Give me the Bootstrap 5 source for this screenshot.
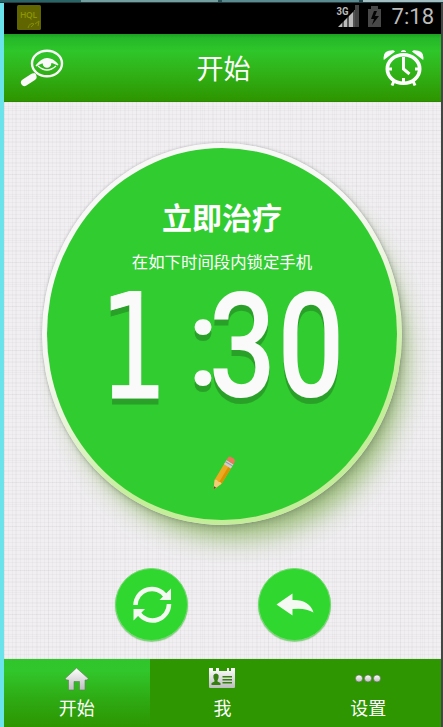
<!DOCTYPE html>
<html lang="zh-CN">
<head>
<meta charset="utf-8">
<meta name="viewport" content="width=device-width, initial-scale=1">
<title>开始</title>
<link href="https://cdn.jsdelivr.net/npm/bootstrap@5.3.0/dist/css/bootstrap.min.css" rel="stylesheet">
<style>
body{background:#eeecef;font-family:Roboto,"Noto Sans CJK SC",sans-serif;width:443px;height:727px}
svg{display:block;flex:none}
.desktop-strip{height:3px;background:linear-gradient(90deg,#2a6467 0 81px,#739fa1 81px 218px,#2a5558 218px 222px,#5a8b91 222px 359px,#20474c 359px 363px,#a4bfc4 363px);border-bottom:1px solid #213f42}
.device{border-left:4px solid #6be3eb;border-right:2px solid #454545;height:724px}
.status{height:31px;background:#000;padding:0 7px 3px 13px;color:#bcbcbc}
.clock{font-size:22px;line-height:28px}
.app-head{height:68px;background:linear-gradient(#1d9f20 0,#25b829 6%,#2ec62a 25%,#30b015 60%,#2d9500 98%,#268100);padding:0 17px 0 16px}
.app-head h1{font-size:27px;line-height:40px;padding-top:4px}
.woven{background-color:#f1eff2;background-image:repeating-linear-gradient(0deg,rgba(80,70,80,.035) 0 1px,transparent 1px 4px),repeating-linear-gradient(90deg,rgba(80,70,80,.035) 0 1px,transparent 1px 4px),repeating-linear-gradient(0deg,rgba(80,70,80,.03) 0 1px,transparent 1px 11px),repeating-linear-gradient(90deg,rgba(80,70,80,.03) 0 1px,transparent 1px 11px)}
.stage{height:557px;padding-top:41px}
.disc{width:360px;height:382px;border-radius:50%;padding:5px;margin-left:-1px;background:linear-gradient(155deg,#f8f8f6 35%,#edf5df 50%,#c5ee9b 72%,#c2ec99);box-shadow:0 0 3px rgba(90,90,100,.4),3px 4px 6px rgba(90,100,90,.25),12px 22px 24px -7px rgba(110,165,55,.62)}
.disc-face{border-radius:50%;background:#31cc30;padding-top:49px;color:#fff}
.disc h2{font-size:30px;line-height:44px}
.disc p{font-size:16.4px;line-height:24px;margin-top:10px}
.digits{margin-top:10px;overflow:visible}
.digits text{fill:#fafafa;font-family:Roboto,sans-serif;font-weight:500}
.digits .slab{font-family:"DejaVu Sans Mono",monospace;font-weight:400;stroke:#fafafa;stroke-width:1}
.digits g{filter:drop-shadow(0 6px 0 #29a129)}
.pencil{margin:48px 0 0 5px}
.actions{gap:70px;margin-top:43px;margin-right:-1px}
.round-btn{width:73px;height:73px;background:#30d72f;border:1px solid #74db72;box-shadow:0 1px 1px rgba(80,180,70,.6)}
.tabs{height:68px;background:#2d9600}
.tab-item{color:#fff;font-size:18px;line-height:24px;padding-top:8px}
.tab-item.current{background:linear-gradient(#30c52b 0,#31c62b 18%,#2eaa13 60%,#2c9500)}
.tab-item span{margin-top:6px}
</style>
</head>
<body class="overflow-hidden">
<div class="desktop-strip"></div>
<div class="device d-flex flex-column">
<div class="status d-flex justify-content-between align-items-center">
<svg width="24" height="25" viewBox="0 0 24 25"><rect width="24" height="25" rx="1.5" fill="#606500"/><text x="3" y="13" font-family="Open Sans" font-size="8.5" font-weight="600" fill="#8e9700" textLength="17">HQL</text><path d="M11 23q2-6 6-4l-3 3m4-3 4-3-1 5" fill="none" stroke="#858d00"/></svg>
<div class="d-flex align-items-center">
<svg width="48" height="25" viewBox="338 4 48 25"><path d="M340 26 361 5v21z" fill="#bbb"/><path d="M357 4h4v22h-4z" fill="#444"/><path d="M345 18v9m5-14v14m6-17v17" stroke="#000" stroke-width="1.1"/><path d="M338 4h14v9l-7 3h-7z" fill="#000"/><text x="338.5" y="14" font-size="10.5" font-weight="700" fill="#bbb" textLength="12" lengthAdjust="spacingAndGlyphs">3G</text><path d="M370 8h3V5h7v3h3v18h-13z" fill="#484848"/><path d="m376 10-3 8h3l-2 6 7-9h-4l2-5z" fill="#050505"/></svg>
<span class="clock ms-1 ps-1">7:18</span>
</div>
</div>
<header class="app-head d-flex justify-content-between align-items-center text-white">
<svg width="44" height="38" viewBox="20 49 44 38" fill="none" stroke="#fafafa"><ellipse cx="47" cy="63.5" rx="15" ry="12.8" stroke-width="2.4"/><path d="m35.5 74-5.500 5" stroke-width="3"/><path d="m33 77-8.500 5.500" stroke-width="7" stroke-linecap="round"/><path d="M36 66q11-14 22-1-11-7-22 1" fill="#fafafa" stroke-width="1.300"/><path d="M38 66q9 8 18 0" stroke-width="1.300"/><circle cx="47" cy="63.500" r="4.300" fill="#fafafa" stroke="none"/></svg>
<h1 class="mb-0 fw-normal">开始</h1>
<svg width="41" height="38" viewBox="383 49 41 38" fill="none" stroke="#fff"><ellipse cx="403.5" cy="69" rx="16.2" ry="14.2" stroke-width="3.6"/><path d="M383.800 60q-1.800-10 9.500-9.700l1.800 1.200zM423.200 60q1.800-10-9.500-9.700l-1.800 1.200z" fill="#fff" stroke="none"/><path d="M401 51.500q2.500-2 5 0z" fill="#fff"/><path d="m394 81-2 4.500m21-4.500 2 4.500" stroke-width="3"/><path d="M403.500 57v12l6 5" stroke-width="3"/><path d="M403.500 78v4M388 69h4m23 0h4" stroke-width="3"/></svg>
</header>
<main class="stage woven d-flex flex-column align-items-center">
<section class="disc d-flex">
<div class="disc-face flex-fill d-flex flex-column align-items-center">
<h2 class="mb-0 fw-bold">立即治疗</h2>
<p class="mb-0">在如下时间段内锁定手机</p>
<svg class="digits" width="240" height="122" viewBox="102 285 240 122"><g><text class="slab" transform="translate(97.500 398) scale(.77 1)" font-size="147">1</text><text x="187" y="385" font-size="122">:</text><text transform="translate(209 397) scale(.80 1)" font-size="147">3</text><text transform="translate(277.500 397) scale(.80 1)" font-size="147">0</text></g></svg>
<svg class="pencil" width="26" height="36" viewBox="212 454 26 36"><g transform="translate(213.500 488.500) rotate(31)"><path d="M0 0-4-9v-20h8v20z" fill="#ecaa22"/><path d="M1-9v-20h3v20z" fill="#dc9100"/><path d="m0 0-4-9 2-1 2 1 2-1 2 1z" fill="#f1cd79"/><path d="M0 0-1.200-3h2.400z" fill="#5b4930"/><path d="M-4-32h8v5h-8z" fill="#cfcfcf"/><path d="M-4-30h8" stroke="#999"/><path d="M-4-32v-2q0-3 4-3t4 3v2z" fill="#ee765c"/></g></svg>
</div>
</section>
<div class="actions d-flex">
<button class="round-btn btn p-0 rounded-circle d-flex align-items-center justify-content-center" aria-label="刷新"><svg width="40" height="40" viewBox="131 585 40 40"><g fill="none" stroke="#f4faf2" stroke-width="4.500"><path d="M134.500 605a16.500 16.500 0 0 1 30-9M168 604a16.500 16.500 0 0 1-30 9.500"/></g><path d="M170 588.500v11.500h-11.500zM132.500 620.500V609H144z" fill="#f4faf2"/></svg></button>
<button class="round-btn btn p-0 rounded-circle d-flex align-items-center justify-content-center" aria-label="返回"><svg width="40" height="40" viewBox="275 585 40 40"><path d="m276.500 604.500 16-11v6.500q17-.5 21 12.500-8-5-21-3.500v6.500z" fill="#f4faf2"/></svg></button>
</div>
</main>
<nav class="tabs d-flex">
<a class="tab-item current col-4 d-flex flex-column align-items-center text-decoration-none" href="#"><svg width="26" height="24" viewBox="64 667 26 24"><defs><linearGradient id="silver" x2="0" y2="1"><stop stop-color="#fff"/><stop offset="1" stop-color="#bdbdc0"/></linearGradient></defs><path d="m76.500 668 11.800 10.500-1.300 1.500h-2v10h-5.500v-8.500h-5.500v8.500h-5.500v-10h-2l-1.300-1.500z" fill="url(#silver)" stroke="#5a7f54" stroke-width=".6"/></svg><span>开始</span></a>
<a class="tab-item col-4 d-flex flex-column align-items-center text-decoration-none" href="#"><svg width="28" height="24" viewBox="208 667 28 24"><path d="M209 668h4v3h3v-3h3v3h8v-3h2v3h2v-3h4v19q0 1-1 1h-24q-1 0-1-1z" fill="url(#silver)"/><path d="M211.500 685v-2l3-1.500v-1q-3-6.500 1.500-7 4.500.5 1.500 7v1l3 1.500v2zm11-9h9.500v1.500h-9.500zm0 3h9.500v1.500h-9.500zm0 3h9.500v1.500h-9.500z" fill="#357f10"/></svg><span>我</span></a>
<a class="tab-item col-4 d-flex flex-column align-items-center text-decoration-none" href="#"><svg width="28" height="24" viewBox="354 667 28 24"><g fill="url(#silver)" stroke="#57704a" stroke-width=".7"><circle cx="359" cy="678.500" r="3.600"/><circle cx="368" cy="678.500" r="3.600"/><circle cx="377" cy="678.500" r="3.600"/></g></svg><span>设置</span></a>
</nav>
</div>
<script src="https://cdn.jsdelivr.net/npm/bootstrap@5.3.0/dist/js/bootstrap.bundle.min.js"></script>
</body>
</html>
